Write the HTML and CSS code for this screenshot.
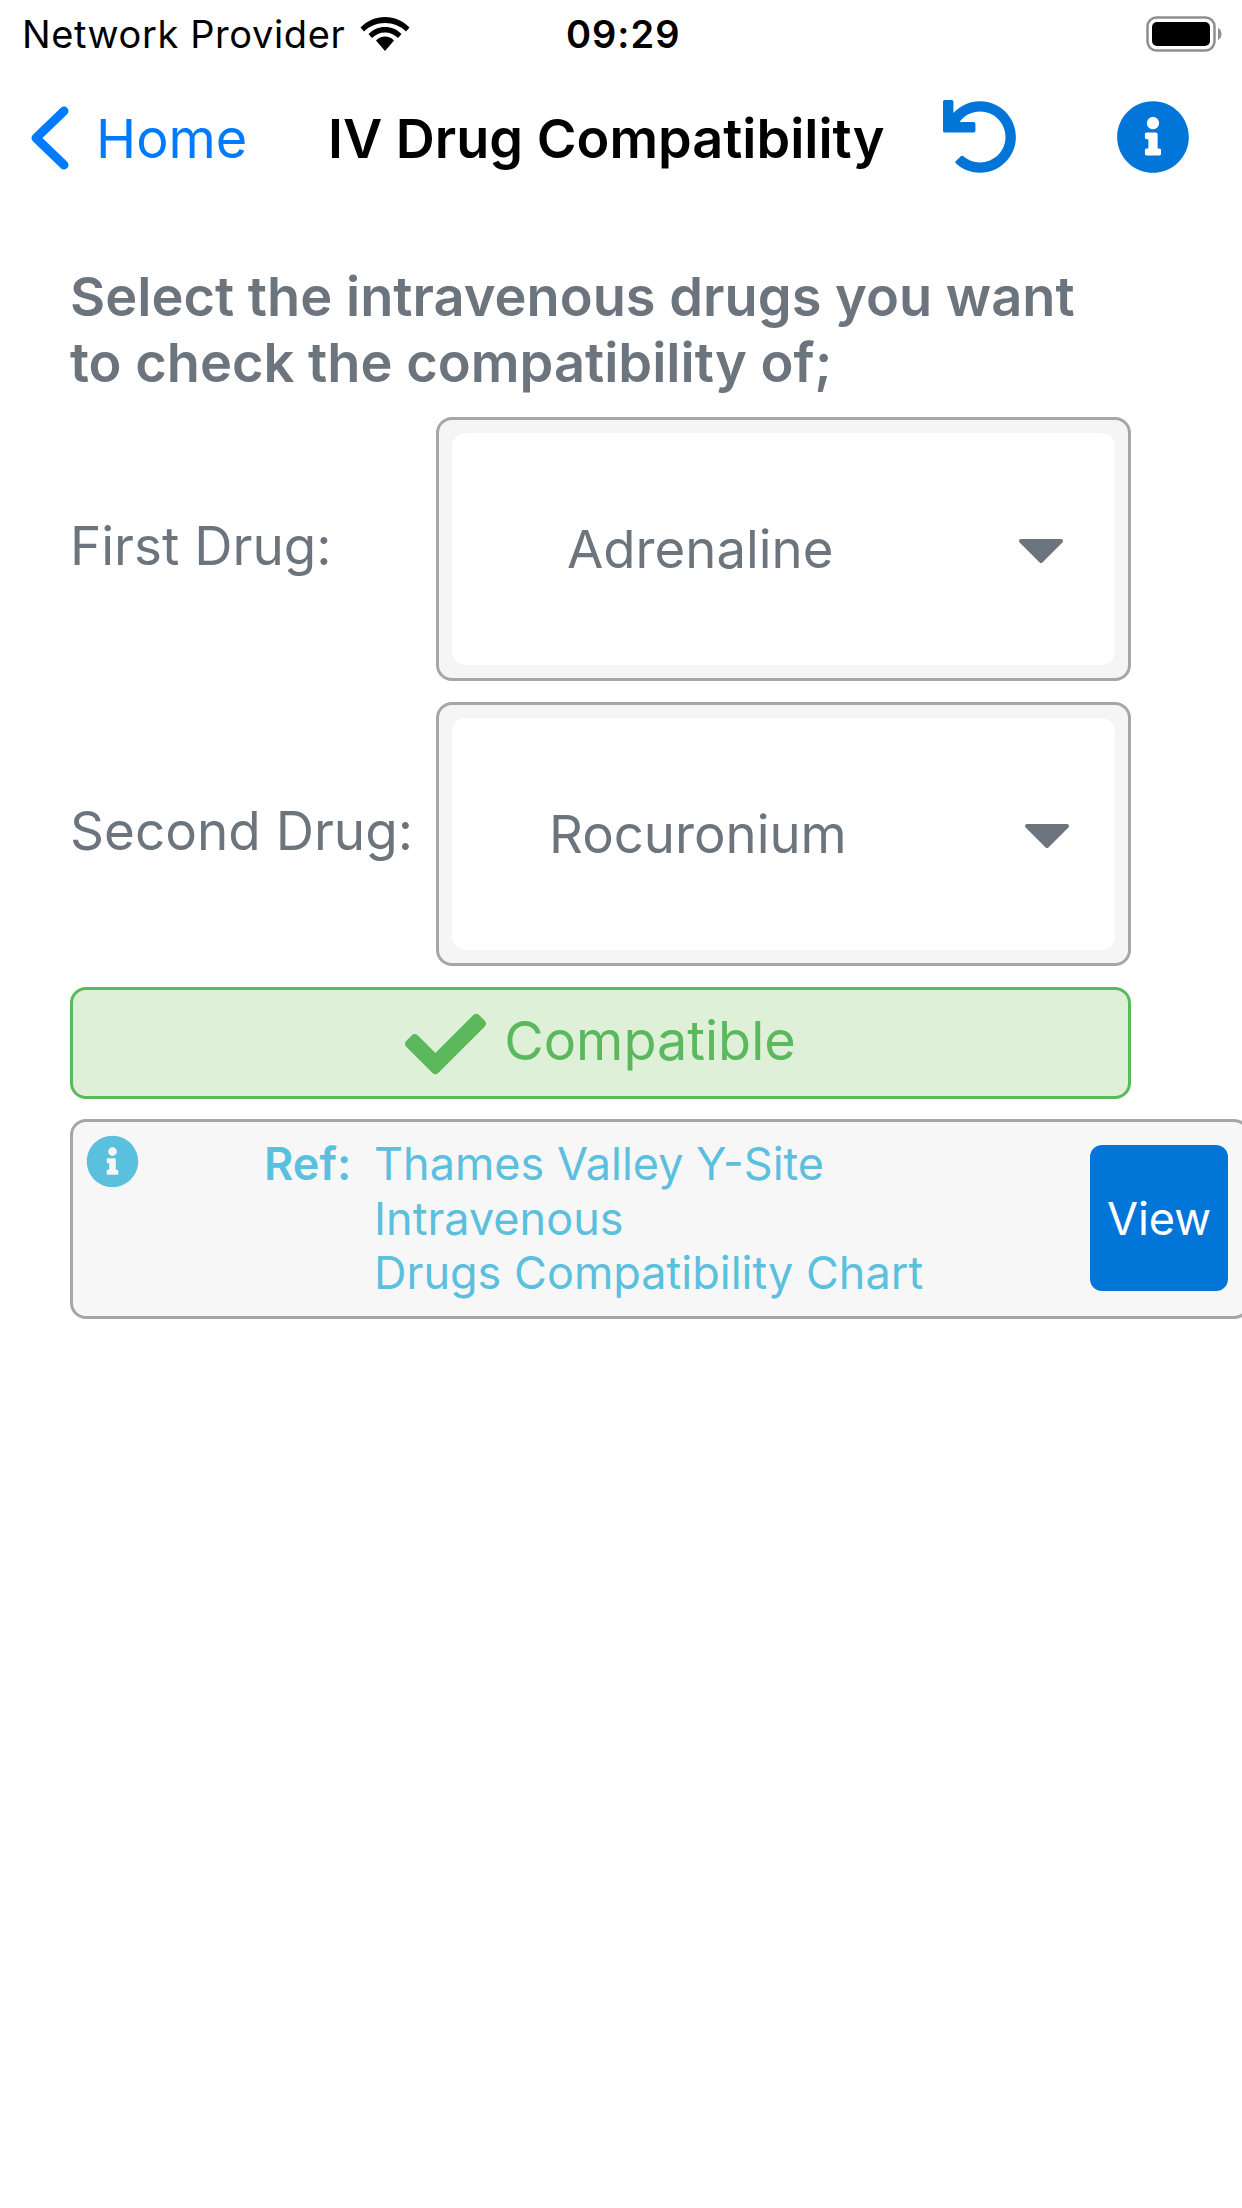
FILE: index.html
```html
<!DOCTYPE html>
<html lang="en">
<head>
<meta charset="utf-8">
<title>IV Drug Compatibility</title>
<link rel="stylesheet" href="styles.css">
</head>
<body>
<div class="status">
  <div class="status-left">
    <span class="carrier">Network Provider</span>
    <svg class="wifi" viewBox="0 0 50 36"><path d="M25 8C33 8 40.500 11 46 16.500L49.500 12.500C43 6 34.500 2 25 2C15.500 2 7 6 .5 12.500L4 16.500C9.500 11 17 8 25 8Z"/><path d="M25 17.500C30 17.500 34.500 19.500 38 23L41.500 19C37 14.500 31.500 12 25 12C18.500 12 13 14.500 8.500 19L12 23C15.500 19.500 20 17.500 25 17.500Z"/><path d="M25 21.500C21.500 21.500 18.500 23 16 25.500L25 36L34 25.500C31.500 23 28.500 21.500 25 21.500Z"/></svg>
  </div>
  <span class="clock">09:29</span>
  <svg class="battery" viewBox="0 0 76 36"><rect x="1.500" y="1.500" width="67" height="33" rx="9" fill="none" stroke="#8e8e8e" stroke-width="2.500"/><rect x="6" y="6" width="58" height="24" rx="5" fill="#000"/><path d="M72 12c2.500 1 3.500 3.500 3.500 6s-1 5-3.500 6z" fill="#8e8e8e"/></svg>
</div>

<header class="nav">
  <div class="back">
    <svg class="chevron" viewBox="0 0 40 66"><path d="M35 6 7 33l28 27" fill="none" stroke="#007aff" stroke-width="9" stroke-linecap="round" stroke-linejoin="round"/></svg>
    <span>Home</span>
  </div>
  <h1 class="title">IV Drug Compatibility</h1>
  <svg class="nav-icon undo" viewBox="0 0 512 512"><path d="M212.333 224.333H12c-6.627 0-12-5.373-12-12V12C0 5.373 5.373 0 12 0h48c6.627 0 12 5.373 12 12v78.112C117.773 39.279 184.26 7.47 258.175 8.007c136.906.994 246.448 111.623 246.157 248.532C504.041 393.258 393.12 504 256.333 504c-64.089 0-122.496-24.313-166.51-64.215-5.099-4.622-5.334-12.554-.467-17.42l33.967-33.967c4.474-4.474 11.662-4.717 16.401-.525C170.76 415.336 211.58 432 256.333 432c97.268 0 176-78.716 176-176 0-97.267-78.716-176-176-176-58.496 0-110.28 28.476-142.274 72.333h98.274c6.627 0 12 5.373 12 12v48c0 6.627-5.373 12-12 12z"/></svg>
  <svg class="nav-icon info" viewBox="0 0 512 512"><path d="M256 8C119.043 8 8 119.083 8 256c0 136.997 111.043 248 248 248s248-111.003 248-248C504 119.083 392.957 8 256 8zm0 110c23.196 0 42 18.804 42 42s-18.804 42-42 42-42-18.804-42-42 18.804-42 42-42zm56 254c0 6.627-5.373 12-12 12h-88c-6.627 0-12-5.373-12-12v-24c0-6.627 5.373-12 12-12h12v-64h-12c-6.627 0-12-5.373-12-12v-24c0-6.627 5.373-12 12-12h64c6.627 0 12 5.373 12 12v100h12c6.627 0 12 5.373 12 12v24z"/></svg>
</header>

<main class="content">
  <h2 class="lead">Select the intravenous drugs you want<br>to check the compatibility of;</h2>

  <div class="field">
    <label class="field-label">First Drug:</label>
    <div class="select">
      <div class="select-inner">
        <span class="select-value value-first">Adrenaline</span>
        <svg class="caret" viewBox="0 0 48 28"><path d="M4 4h40L24 24z" fill="#6c757d" stroke="#6c757d" stroke-width="4" stroke-linejoin="round"/></svg>
      </div>
    </div>
  </div>

  <div class="field">
    <label class="field-label">Second Drug:</label>
    <div class="select">
      <div class="select-inner">
        <span class="select-value value-second">Rocuronium</span>
        <svg class="caret caret-second" viewBox="0 0 48 28"><path d="M4 4h40L24 24z" fill="#6c757d" stroke="#6c757d" stroke-width="4" stroke-linejoin="round"/></svg>
      </div>
    </div>
  </div>

  <div class="result">
    <svg class="check" viewBox="0 0 512 512"><path d="M173.898 439.404l-166.4-166.400c-9.997-9.997-9.997-26.206 0-36.204l36.203-36.204c9.997-9.998 26.207-9.998 36.204 0L192 312.690 432.095 72.596c9.997-9.997 26.207-9.997 36.204 0l36.203 36.204c9.997 9.997 9.997 26.206 0 36.204l-294.400 294.401c-9.998 9.997-26.207 9.997-36.204-.001z"/></svg>
    <span class="result-text">Compatible</span>
  </div>

  <div class="ref">
    <svg class="ref-icon" viewBox="0 0 512 512"><path d="M256 8C119.043 8 8 119.083 8 256c0 136.997 111.043 248 248 248s248-111.003 248-248C504 119.083 392.957 8 256 8zm0 110c23.196 0 42 18.804 42 42s-18.804 42-42 42-42-18.804-42-42 18.804-42 42-42zm56 254c0 6.627-5.373 12-12 12h-88c-6.627 0-12-5.373-12-12v-24c0-6.627 5.373-12 12-12h12v-64h-12c-6.627 0-12-5.373-12-12v-24c0-6.627 5.373-12 12-12h64c6.627 0 12 5.373 12 12v100h12c6.627 0 12 5.373 12 12v24z"/></svg>
    <strong class="ref-label">Ref:</strong>
    <p class="ref-text">Thames Valley Y-Site<br>Intravenous<br>Drugs Compatibility Chart</p>
    <div class="view">View</div>
  </div>
</main>
</body>
</html>
```
FILE: styles.css
```css
* { box-sizing: border-box; }
html, body { margin: 0; padding: 0; width: 1242px; height: 2208px; overflow: hidden; background: #fff; }
body { font-family: Inter, "Noto Sans", sans-serif; color: #000; }

.status { height: 68px; display: flex; align-items: center; padding: 0 22px; position: relative; }
.status-left { display: flex; align-items: center; gap: 15px; width: 544px; }
.carrier { font-size: 38px; letter-spacing: .6px; white-space: nowrap; }
.wifi { width: 50px; height: 36px; margin-top: -3px; flex: none; }
.clock { font-size: 38px; font-weight: 600; letter-spacing: 1px; }
.battery { width: 76px; height: 36px; margin-left: auto; margin-right: -2px; }

.nav { height: 140px; display: flex; align-items: center; padding-left: 29px; }
.back { display: flex; align-items: center; gap: 27px; width: 299px; color: #007aff; font-size: 54px; }
.chevron { width: 40px; height: 66px; flex: none; }
.title { margin: 0; font-size: 54px; font-weight: 600; width: 615px; white-space: nowrap; }
.nav-icon { fill: #0275d8; }
.undo { width: 74px; height: 74px; margin-top: -2px; }
.info { width: 74px; height: 74px; margin-left: 99px; margin-top: -2px; }

.content { padding: 0 0 0 70px; }
.lead { margin: 55px 0 22px; font-size: 54.200px; line-height: 66px; font-weight: 600; color: #6c757d; white-space: nowrap; }
.field { display: flex; align-items: center; width: 1061px; margin-bottom: 21px; }
.field-label { width: 366px; font-size: 53px; color: #6c757d; margin-top: -6px; white-space: nowrap; }
.select { flex: 1; height: 264px; border: 3px solid #a6a6a6; border-radius: 16px; background: #f5f5f5; padding: 13px; }
.select-inner { height: 100%; background: #fff; border-radius: 14px; display: flex; align-items: center; }
.select-value { font-size: 52.700px; color: #6c757d; }
.value-first { margin-left: 115px; }
.value-second { margin-left: 97px; }
.caret { width: 48px; height: 28px; margin: 4px 50px 0 auto; }
.caret-second { margin-right: 44px; }

.result { width: 1061px; height: 112px; display: flex; align-items: center; justify-content: center; gap: 18px; background: #dff0d8; border: 3px solid #5cb85c; border-radius: 16px; color: #5cb85c; font-size: 54px; }
.result-text { margin-top: -5px; }
.check { width: 81px; height: 84px; fill: #5cb85c; margin-top: 2px; }

.ref { width: 1180px; height: 200px; margin-top: 20px; display: flex; align-items: flex-start; background: #f7f7f7; border: 3px solid #a6a6a6; border-radius: 16px; color: #5bc0de; font-size: 45px; padding-left: 13px; }
.ref-icon { width: 53px; height: 53px; fill: #5bc0de; flex: none; margin-top: 13px; }
.ref-label { margin: 15px 0 0 125px; width: 110px; font-weight: 600; line-height: 54.500px; }
.ref-text { margin: 15px 0 0; width: 716px; line-height: 54.500px; white-space: nowrap; }
.view { width: 138px; height: 146px; margin-top: 23px; background: #0275d8; color: #fff; border-radius: 12px; display: flex; align-items: center; justify-content: center; font-size: 45px; }
```
